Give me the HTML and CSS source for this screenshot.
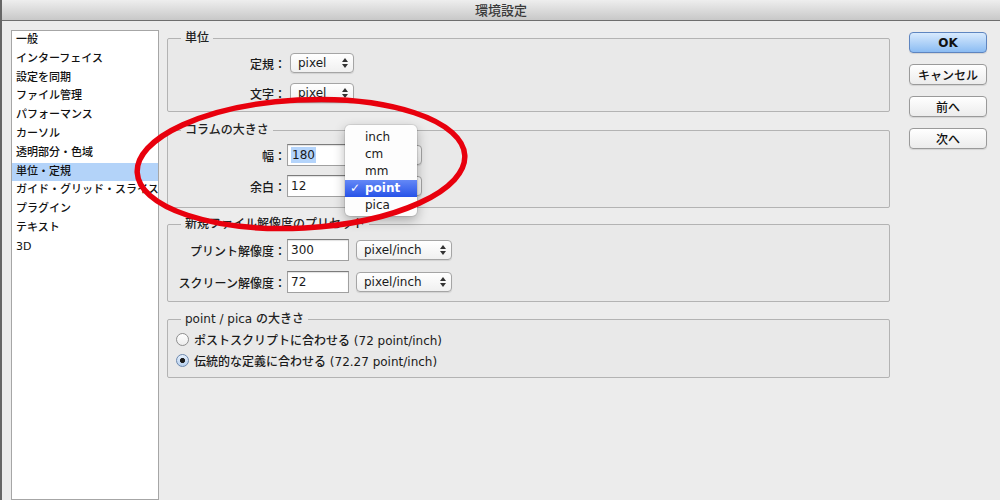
FILE: index.html
```html
<!DOCTYPE html>
<html lang="ja">
<head>
    <meta charset="UTF-8">
    <meta name="viewport" content="width=device-width, initial-scale=1.0">
    <title>環境設定</title>
    <link rel="stylesheet" href="styles.css">
</head>
<body>
<div class="dialog">
    <div class="titlebar">環境設定</div>
    <div class="window">
        <ul class="sidebar">
            <li>一般</li>
            <li>インターフェイス</li>
            <li>設定を同期</li>
            <li>ファイル管理</li>
            <li>パフォーマンス</li>
            <li>カーソル</li>
            <li>透明部分・色域</li>
            <li class="selected">単位・定規</li>
            <li>ガイド・グリッド・スライス</li>
            <li>プラグイン</li>
            <li>テキスト</li>
            <li>3D</li>
        </ul>

        <div class="panes">
            <fieldset class="group group-units">
                <legend>単位</legend>
                <div class="field">
                    <span class="label">定規：</span>
                    <span class="select select-unit">pixel
                        <svg width="6" height="10" viewBox="0 0 6 10"><path d="M0 4 L3 0 L6 4 Z M0 6 L3 10 L6 6 Z"/></svg>
                    </span>
                </div>
                <div class="field">
                    <span class="label">文字：</span>
                    <span class="select select-unit">pixel
                        <svg width="6" height="10" viewBox="0 0 6 10"><path d="M0 4 L3 0 L6 4 Z M0 6 L3 10 L6 6 Z"/></svg>
                    </span>
                </div>
            </fieldset>

            <fieldset class="group group-columns">
                <legend>コラムの大きさ</legend>
                <div class="field">
                    <span class="label">幅：</span>
                    <span class="input"><span class="sel-text">180</span></span>
                    <!-- value hidden under the open menu -->
                    <span class="select select-col">
                        <svg width="6" height="10" viewBox="0 0 6 10"><path d="M0 4 L3 0 L6 4 Z M0 6 L3 10 L6 6 Z"/></svg>
                    </span>
                </div>
                <div class="field">
                    <span class="label">余白：</span>
                    <span class="input">12</span>
                    <span class="select select-col">
                        <svg width="6" height="10" viewBox="0 0 6 10"><path d="M0 4 L3 0 L6 4 Z M0 6 L3 10 L6 6 Z"/></svg>
                    </span>
                </div>
            </fieldset>

            <fieldset class="group group-presets">
                <legend>新規ファイル解像度のプリセット</legend>
                <div class="field">
                    <span class="label">プリント解像度：</span>
                    <span class="input">300</span>
                    <span class="select select-res">pixel/inch
                        <svg width="6" height="10" viewBox="0 0 6 10"><path d="M0 4 L3 0 L6 4 Z M0 6 L3 10 L6 6 Z"/></svg>
                    </span>
                </div>
                <div class="field">
                    <span class="label">スクリーン解像度：</span>
                    <span class="input">72</span>
                    <span class="select select-res">pixel/inch
                        <svg width="6" height="10" viewBox="0 0 6 10"><path d="M0 4 L3 0 L6 4 Z M0 6 L3 10 L6 6 Z"/></svg>
                    </span>
                </div>
            </fieldset>

            <fieldset class="group group-point">
                <legend>point / pica の大きさ</legend>
                <label class="option"><span class="radio"></span>ポストスクリプトに合わせる (72 point/inch)</label>
                <label class="option"><span class="radio checked"></span>伝統的な定義に合わせる (72.27 point/inch)</label>
            </fieldset>
        </div>

        <div class="actions">
            <button class="btn btn-default">OK</button>
            <button class="btn">キャンセル</button>
            <button class="btn">前へ</button>
            <button class="btn">次へ</button>
        </div>
    </div>

    <!-- open unit menu of the 幅 field -->
    <ul class="popup">
        <li>inch</li>
        <li>cm</li>
        <li>mm</li>
        <li class="checked">point</li>
        <li>pica</li>
    </ul>

    <svg class="mark" width="1000" height="500" viewBox="0 0 1000 500">
        <ellipse cx="301" cy="164" rx="164" ry="64" transform="rotate(-3 301 164)" fill="none" stroke="#e8000d" stroke-width="5.5"/>
    </svg>
</div>
</body>
</html>
```

FILE: styles.css
```css
body {
    margin: 0;
    background: #ececec;
    color: #1a1a1a;
    font-family: "DejaVu Sans", "Noto Sans CJK JP", sans-serif;
    font-size: 12px;
    font-weight: 500;
}
.dialog {
    position: relative;
    height: 500px;
    border-left: 2px solid #666;
    overflow: hidden;
}
.titlebar {
    height: 20px;
    line-height: 20px;
    text-align: center;
    font-family: "Noto Sans CJK JP", sans-serif;
    font-size: 13px;
    color: #3a3a3a;
    background: linear-gradient(#eeeeee, #c8c8c8);
    border-bottom: 1px solid #6e6e6e;
}
.window {
    display: flex;
    height: 479px;
}

/* left list */
.sidebar {
    list-style: none;
    margin: 9px 0 0 9px;
    padding: 0;
    width: 148px;
    box-sizing: border-box;
    background: #fff;
    border: 1px solid #a6a6a6;
    font-size: 11px;
    color: #111;
}
.sidebar li {
    height: 18.8px;
    line-height: 18.8px;
    padding-left: 4px;
    white-space: nowrap;
    overflow: hidden;
}
.sidebar .selected {
    background: #b3d3f9;
}

/* groups */
.panes {
    display: flex;
    flex-direction: column;
    width: 723px;
    margin-left: 8px;
    padding-top: 10px;
}
.group {
    margin: 0;
    min-width: 0;
    border: 1px solid #b3b3b3;
    border-radius: 2px;
    background: #e9e9e9;
    display: flex;
    flex-direction: column;
}
.group legend {
    margin-left: 13px;
    padding: 0 4px;
    font-size: 12px;
    line-height: 14px;
    color: #222;
}
.group-units {
    padding: 3px 0 3px;
}
.group-columns {
    margin-top: 11px;
    padding: 3px 0 6px;
    gap: 1px;
}
.group-presets {
    margin-top: 9px;
    padding: 4px 0 4px;
    gap: 2px;
}
.group-point {
    margin-top: 10px;
    padding: 3px 0 6px;
}

.field {
    display: flex;
    align-items: center;
    height: 30px;
}
.label {
    width: 118px;
    text-align: right;
    white-space: nowrap;
    font-family: "Noto Sans CJK JP", sans-serif;
}
.input {
    width: 62px;
    height: 22px;
    box-sizing: border-box;
    margin-left: 1px;
    padding-left: 3px;
    line-height: 20px;
    background: #fff;
    border: 1px solid #a0a0a0;
    border-top-color: #7c7c7c;
    box-shadow: inset 0 1px 1px rgba(0, 0, 0, .12);
}
.sel-text {
    background: #b4d4fb;
    padding: 1px 1px;
}
.select {
    display: flex;
    align-items: center;
    height: 20px;
    box-sizing: border-box;
    padding: 0 5px 0 7px;
    border: 1px solid #a5a5a5;
    border-radius: 4px;
    background: linear-gradient(#ffffff, #f0f0f0);
    box-shadow: 0 1px 1px rgba(0, 0, 0, .1);
}
.select svg {
    margin-left: auto;
    fill: #333;
}
.select-unit {
    width: 64px;
    margin-left: 4px;
}
.select-col {
    width: 66px;
    margin-left: 7px;
}
.select-res {
    width: 96px;
    margin-left: 7px;
}

.option {
    display: flex;
    align-items: center;
    height: 21px;
}
.radio {
    width: 13px;
    height: 13px;
    box-sizing: border-box;
    margin: 0 5px 0 8px;
    border: 1px solid #8e8e8e;
    border-radius: 50%;
    background: linear-gradient(#ffffff, #ececec);
}
.radio.checked {
    border-color: #6b87ad;
    background: radial-gradient(circle, #1c1c1c 0 2.2px, transparent 2.9px), linear-gradient(#e6f0fc, #b7d0ee);
}

/* buttons */
.actions {
    display: flex;
    flex-direction: column;
    gap: 11px;
    width: 78px;
    margin-left: 19px;
    padding-top: 11px;
}
.btn {
    height: 21px;
    padding: 0;
    border: 1px solid #9a9a9a;
    border-radius: 4px;
    background: linear-gradient(#ffffff, #ececec);
    box-shadow: 0 1px 1px rgba(0, 0, 0, .1);
    color: #111;
    font-family: "DejaVu Sans", "Noto Sans CJK JP", sans-serif;
    font-size: 12px;
    font-weight: 500;
}
.btn-default {
    border-color: #5e85c0;
    background: linear-gradient(#d8eafd, #8bbcf3);
    font-weight: bold;
}

/* open menu */
.popup {
    position: absolute;
    left: 343px;
    top: 125px;
    width: 72px;
    box-sizing: border-box;
    margin: 0;
    padding: 3.5px 0 2px;
    list-style: none;
    background: #fdfdfd;
    border-radius: 5px;
    box-shadow: 0 4px 12px rgba(0, 0, 0, .3), 0 0 0 1px rgba(0, 0, 0, .08);
}
.popup li {
    position: relative;
    height: 17px;
    line-height: 17px;
    padding-left: 20px;
}
.popup .checked {
    background: linear-gradient(#6488f6, #2753e8);
    color: #fff;
    font-weight: bold;
}
.popup .checked::before {
    content: "✓";
    position: absolute;
    left: 5px;
}

.mark {
    position: absolute;
    left: -2px;
    top: 0;
    pointer-events: none;
}
```
